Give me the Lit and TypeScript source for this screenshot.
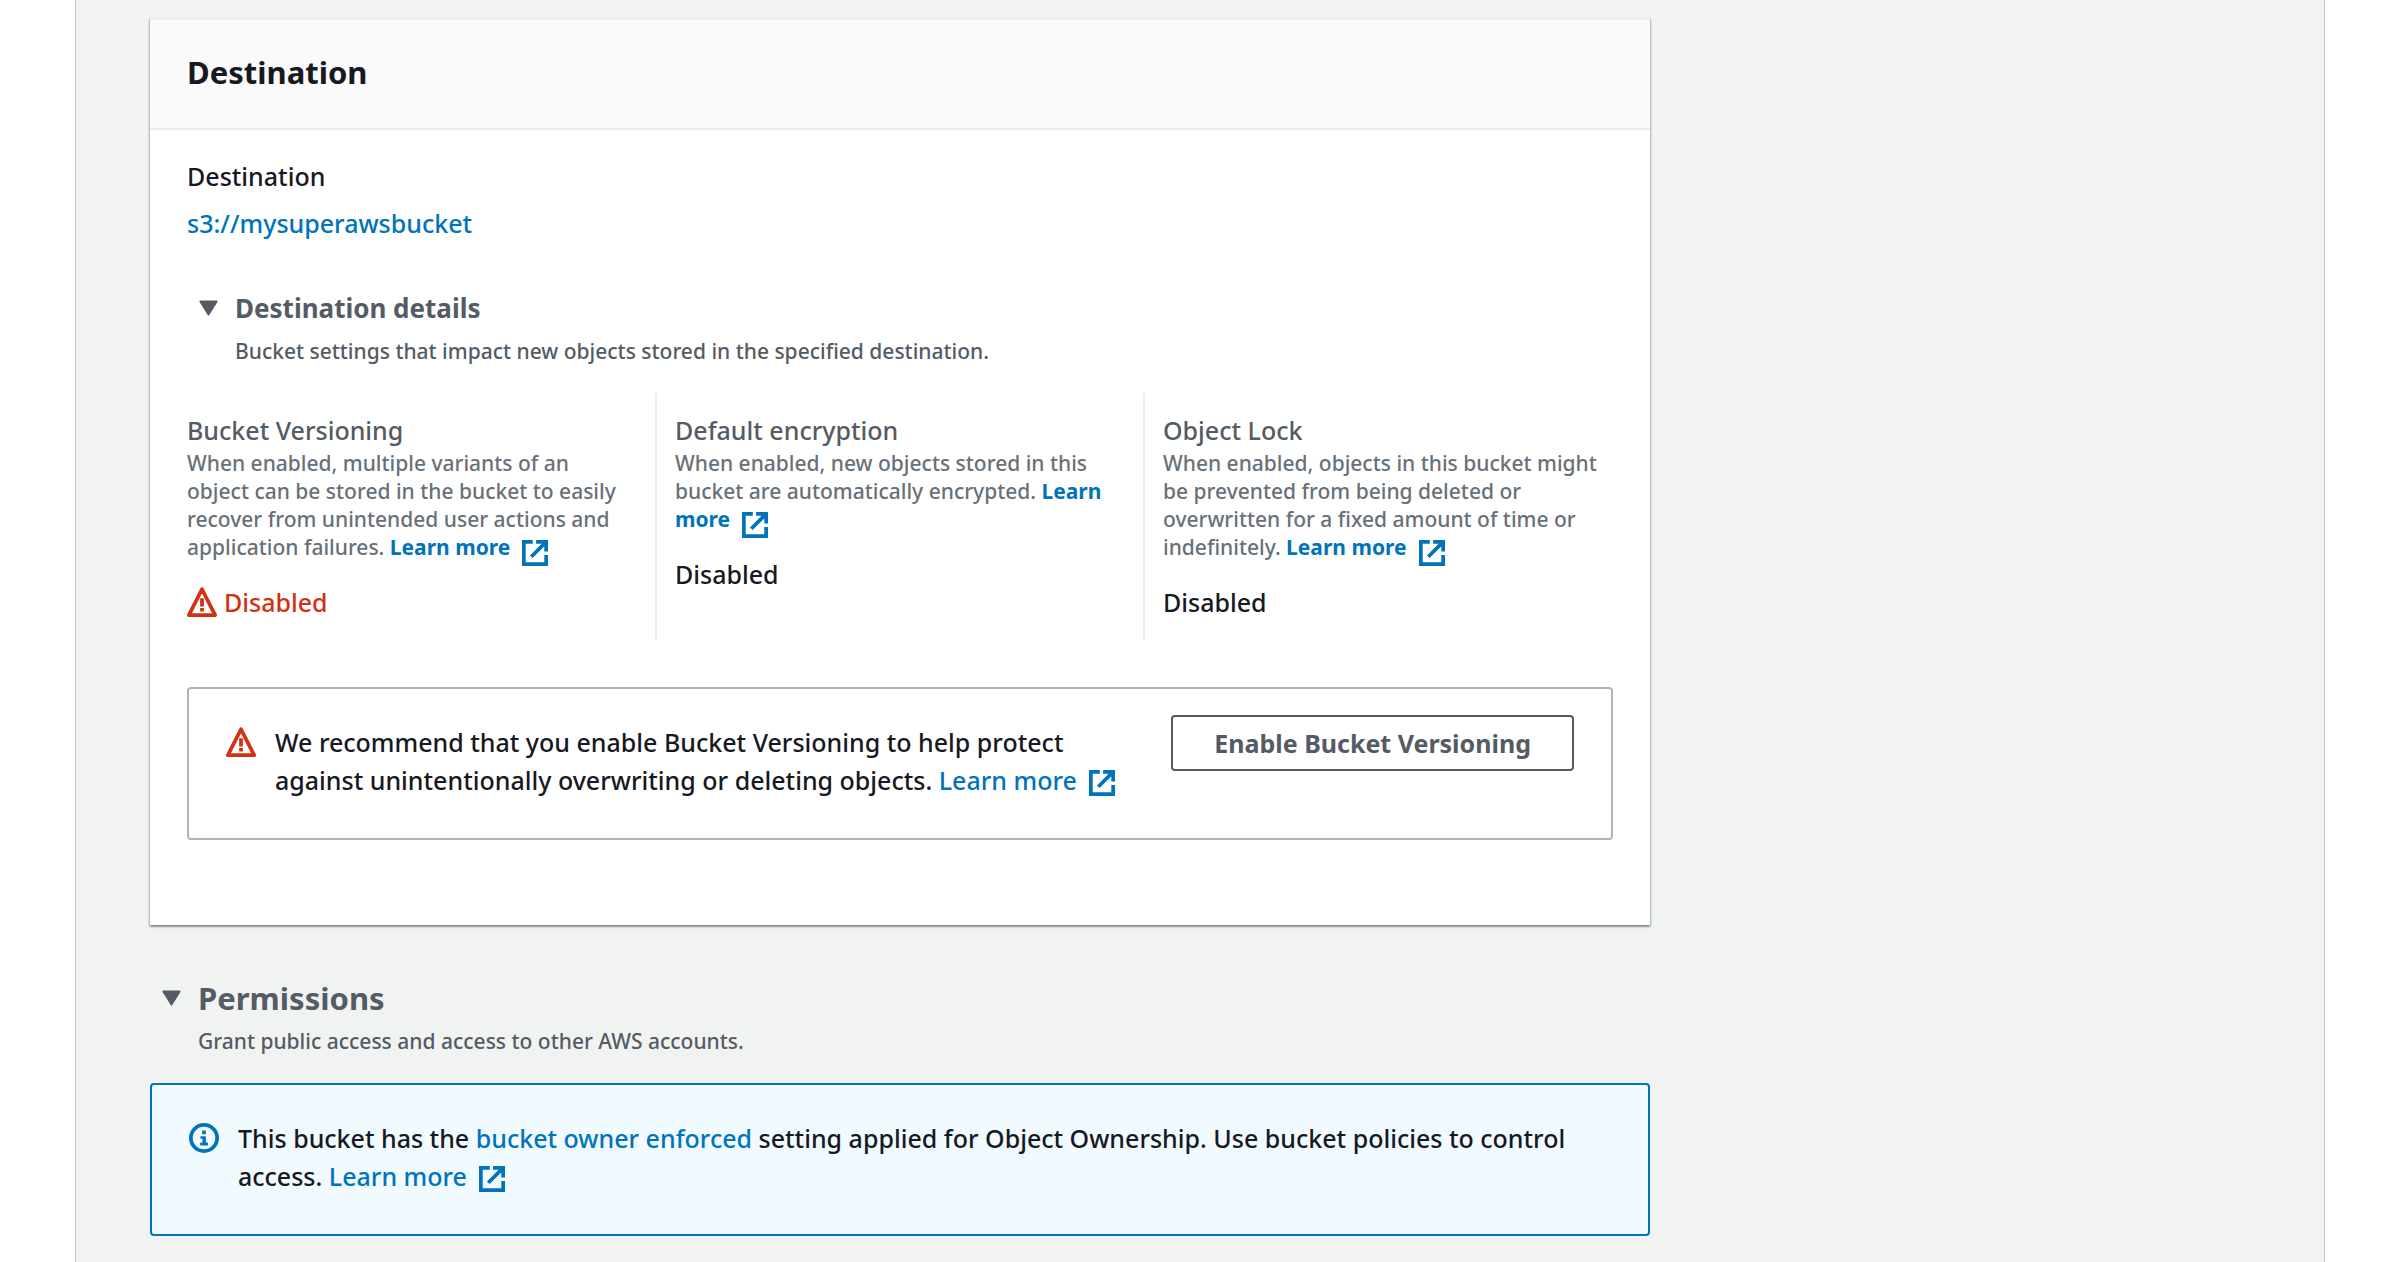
import { LitElement, css, html, svg, nothing } from "lit";
import type { TemplateResult } from "lit";
import { customElement, property, state } from "lit/decorators.js";

type IconName = "external" | "warning" | "info" | "caret";

const ICONS: Record<IconName, { box: string; body: TemplateResult }> = {
  external: {
    box: "1 1 14 14",
    body: svg`<path fill="none" stroke="currentColor" stroke-width="2" d="M8.6 2H14v5.2M6 10l8-8M14 9.1V14H2V2h4.8"/>`,
  },
  warning: {
    box: "0 0 16 16",
    body: svg`<path fill="none" stroke="currentColor" stroke-width="2" stroke-linejoin="round" d="M8 1.2 15 15H1z"/>
      <path fill="currentColor" d="M7 6h2v4.4H7zM7 11.2h2v1.8H7z"/>`,
  },
  info: {
    box: "0 0 16 16",
    body: svg`<circle cx="8" cy="8" r="7" fill="none" stroke="currentColor" stroke-width="2"/>
      <path fill="currentColor" d="M7 4h2v2H7zM6.1 7H9v3.4h1.1V12H6v-1.6h1.2V8.4H6.1z"/>`,
  },
  caret: {
    box: "0 0 19 16",
    body: svg`<path fill="currentColor" stroke="currentColor" stroke-width="2" stroke-linejoin="round" d="M1.4 1.4h16.2L9.5 14.4z"/>`,
  },
};

@customElement("ui-icon")
export class UiIcon extends LitElement {
  static styles = css`
    :host {
      display: inline-block;
      flex: none;
    }
    .glyph {
      display: block;
      width: 100%;
      height: 100%;
    }
  `;

  @property() name: IconName = "external";

  render() {
    const icon = ICONS[this.name];
    return html`<svg class="glyph" viewBox=${icon.box} aria-hidden="true">${icon.body}</svg>`;
  }
}

interface Setting {
  title: string;
  description: string;
  value: string;
  warn?: boolean;
}

const SETTINGS: Setting[] = [
  {
    title: "Bucket Versioning",
    description:
      "When enabled, multiple variants of an object can be stored in the bucket to easily recover from unintended user actions and application failures.",
    value: "Disabled",
    warn: true,
  },
  {
    title: "Default encryption",
    description: "When enabled, new objects stored in this bucket are automatically encrypted.",
    value: "Disabled",
  },
  {
    title: "Object Lock",
    description:
      "When enabled, objects in this bucket might be prevented from being deleted or overwritten for a fixed amount of time or indefinitely.",
    value: "Disabled",
  },
];

@customElement("app-root")
export class AppRoot extends LitElement {
  static styles = css`
    :host {
      display: block;
      background: #fff;
      color: #16191f;
      font-family: "Noto Sans", "Open Sans", sans-serif;
      font-size: 25px;
      font-weight: 500;
      line-height: 38px;
    }
    *,
    *::before {
      box-sizing: border-box;
    }
    h2,
    h3,
    h4,
    p,
    dl,
    dd {
      margin: 0;
      font-size: inherit;
      font-weight: inherit;
    }
    a {
      color: #0073bb;
      text-decoration: none;
    }
    a:hover {
      text-decoration: underline;
    }
    button {
      font: inherit;
      cursor: pointer;
    }
    .frame {
      display: grid;
      grid-template-columns: 5fr 2fr;
      align-items: start;
      min-height: 100vh;
      margin: 0 75px;
      padding: 18px 74px 24px;
      background: #f1f3f3;
      border: solid #bcc2c8;
      border-width: 0 1px;
    }
    .card {
      background: #fff;
      border-top: 2px solid #eaeded;
      box-shadow:
        0 2px 2px 0 rgba(0, 28, 36, 0.3),
        1px 1px 2px 0 rgba(0, 28, 36, 0.2),
        -1px 1px 2px 0 rgba(0, 28, 36, 0.2);
    }
    .card-header {
      padding: 28px 37px 32px;
      background: #fafafa;
      border-bottom: 2px solid #eaeded;
    }
    .heading {
      font-size: 31px;
      line-height: 48px;
      font-weight: 700;
    }
    .card-body {
      padding: 27px 37px 85px;
    }
    .field {
      display: grid;
      gap: 9px;
      justify-items: start;
      margin-bottom: 47px;
    }
    .toggle {
      display: flex;
      align-items: center;
      gap: 17px;
      width: 100%;
      padding: 0 0 0 12px;
      border: 0;
      background: none;
      color: #545b64;
      font-size: 26px;
      font-weight: 700;
      line-height: 38px;
      text-align: left;
    }
    .toggle.large {
      font-size: 31px;
    }
    .caret {
      width: 19px;
      height: 16px;
    }
    .toggle[aria-expanded="false"] .caret {
      transform: rotate(-90deg);
    }
    .note {
      padding: 10px 0 28px 48px;
      color: #545b64;
      font-size: 21px;
      line-height: 28px;
    }
    .settings {
      display: grid;
      grid-template-columns: repeat(3, 1fr);
      margin: 0 -18px 47px -20px;
    }
    .setting {
      padding: 18px 27px 19px 20px;
    }
    .setting + .setting {
      border-left: 2px solid #eaeded;
      padding-left: 18px;
    }
    .setting-title {
      color: #545b64;
    }
    .description {
      margin-bottom: 22px;
      color: #687078;
      font-size: 21px;
      line-height: 28px;
    }
    .description a {
      font-weight: 700;
    }
    .external {
      width: 26px;
      height: 26px;
      margin: -6px 0 -6px 12px;
      vertical-align: baseline;
    }
    .description .external {
      vertical-align: -5px;
    }
    .tail {
      white-space: nowrap;
    }
    .status {
      display: flex;
      align-items: center;
      gap: 7px;
    }
    .status.warn {
      color: #d13212;
    }
    .badge {
      width: 30px;
      height: 30px;
    }
    .flash {
      display: flex;
      align-items: flex-start;
      gap: 19px;
      padding: 26px 37px 31px;
      border: 2px solid #aab7b8;
      border-radius: 4px;
    }
    .flash .badge {
      margin-top: 12px;
      color: #d13212;
    }
    .flash-text {
      flex: 1;
      padding: 8px 0;
    }
    .flash.info {
      background: #f1faff;
      border-color: #0073bb;
    }
    .flash.info .badge {
      color: #0073bb;
    }
    .action {
      margin-left: 18px;
      padding: 7px 41px;
      border: 2px solid #545b64;
      border-radius: 4px;
      background: #fff;
      color: #545b64;
      font-weight: 700;
      white-space: nowrap;
    }
    .permissions {
      margin-top: 54px;
    }
  `;

  @state() private detailsOpen = true;
  @state() private permissionsOpen = true;

  private learnMore() {
    return html`<a href="#learn-more">Learn <span class="tail">more<ui-icon class="external" name="external"></ui-icon></span></a>`;
  }

  private renderSetting(s: Setting) {
    return html`<section class="setting">
      <h4 class="setting-title">${s.title}</h4>
      <p class="description">${s.description} ${this.learnMore()}</p>
      <p class="status ${s.warn ? "warn" : ""}">
        ${s.warn ? html`<ui-icon class="badge" name="warning"></ui-icon>` : nothing}<span>${s.value}</span>
      </p>
    </section>`;
  }

  render() {
    return html`<div class="frame">
      <main>
        <section class="card">
          <header class="card-header"><h2 class="heading">Destination</h2></header>
          <div class="card-body">
            <dl class="field">
              <dt>Destination</dt>
              <dd><a href="#bucket">s3://mysuperawsbucket</a></dd>
            </dl>
            <h3>
              <button
                class="toggle"
                type="button"
                aria-expanded=${String(this.detailsOpen)}
                @click=${() => (this.detailsOpen = !this.detailsOpen)}
              >
                <ui-icon class="caret" name="caret"></ui-icon>Destination details
              </button>
            </h3>
            <p class="note">Bucket settings that impact new objects stored in the specified destination.</p>
            ${this.detailsOpen
              ? html`<div class="settings">${SETTINGS.map((s) => this.renderSetting(s))}</div>`
              : nothing}
            <div class="flash">
              <ui-icon class="badge" name="warning"></ui-icon>
              <p class="flash-text">
                We recommend that you enable Bucket Versioning to help protect against unintentionally overwriting or
                deleting objects. ${this.learnMore()}
              </p>
              <button class="action" type="button">Enable Bucket Versioning</button>
            </div>
          </div>
        </section>

        <section class="permissions">
          <h2>
            <button
              class="toggle large"
              type="button"
              aria-expanded=${String(this.permissionsOpen)}
              @click=${() => (this.permissionsOpen = !this.permissionsOpen)}
            >
              <ui-icon class="caret" name="caret"></ui-icon>Permissions
            </button>
          </h2>
          <p class="note">Grant public access and access to other AWS accounts.</p>
          ${this.permissionsOpen
            ? html`<div class="flash info">
                <ui-icon class="badge" name="info"></ui-icon>
                <p class="flash-text">
                  This bucket has the <a href="#ownership">bucket owner enforced</a> setting applied for Object
                  Ownership. Use bucket policies to control access. ${this.learnMore()}
                </p>
              </div>`
            : nothing}
        </section>
      </main>
    </div>`;
  }
}
